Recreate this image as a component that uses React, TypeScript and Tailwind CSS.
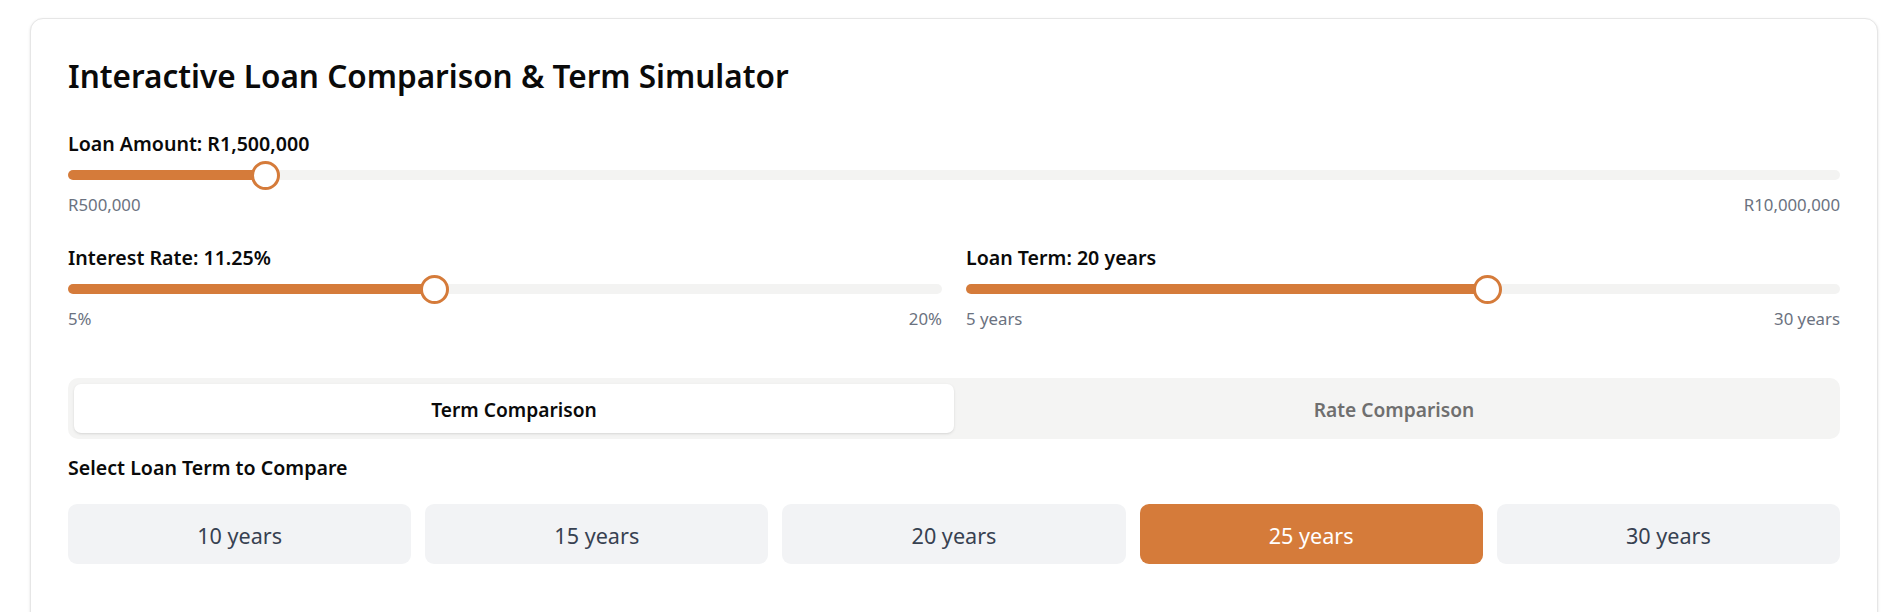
import React, { useState } from "react";

const ORANGE = "#d57b3a";
const TRACK = "#f3f3f2";

const Slider = ({
  min,
  max,
  step,
  value,
  onChange,
}: {
  min: number;
  max: number;
  step: number;
  value: number;
  onChange: (v: number) => void;
}) => {
  const p = (value - min) / (max - min);
  return (
    <input
      type="range"
      min={min}
      max={max}
      step={step}
      value={value}
      onChange={(e) => onChange(Number(e.target.value))}
      className="block w-full h-[10px] appearance-none rounded-full cursor-pointer outline-none [&::-webkit-slider-thumb]:appearance-none [&::-webkit-slider-thumb]:w-[29px] [&::-webkit-slider-thumb]:h-[29px] [&::-webkit-slider-thumb]:rounded-full [&::-webkit-slider-thumb]:bg-white [&::-webkit-slider-thumb]:border-[3px] [&::-webkit-slider-thumb]:border-solid [&::-webkit-slider-thumb]:border-[#d57b3a]"
      style={{
        background: `linear-gradient(to right, ${ORANGE} calc(14.5px + ${p} * (100% - 29px)), ${TRACK} 0)`,
      }}
    />
  );
};

const SliderField = ({
  label,
  minLabel,
  maxLabel,
  ...rest
}: {
  label: string;
  minLabel: string;
  maxLabel: string;
  min: number;
  max: number;
  step: number;
  value: number;
  onChange: (v: number) => void;
}) => (
  <div>
    <div className="text-[19.6px] leading-[29px] font-semibold text-[#0a0a0a] mb-[12px]">
      {label}
    </div>
    <Slider {...rest} />
    <div className="flex justify-between mt-[13px] text-[16.8px] leading-6 text-[#6b7280]">
      <span>{minLabel}</span>
      <span>{maxLabel}</span>
    </div>
  </div>
);

const fmt = (n: number) => "R" + n.toLocaleString("en-US");

export default function App() {
  const [amount, setAmount] = useState(1500000);
  const [rate, setRate] = useState(11.25);
  const [term, setTerm] = useState(20);
  const [tab, setTab] = useState("term");
  const [compareTerm, setCompareTerm] = useState(25);

  return (
    <div className="min-h-screen bg-white pl-[30px] pr-[13px] pt-[18px] font-['Noto_Sans',sans-serif]">
      <div className="rounded-[13px] border border-[#e6e6e6] bg-white px-[37px] pt-[38px] pb-[120px] shadow-sm">
        <h2 className="text-[31.5px] leading-[38px] font-semibold text-[#0a0a0a] mb-[34px]">
          Interactive Loan Comparison &amp; Term Simulator
        </h2>

        {/* SLIDERS */}
        <SliderField
          label={`Loan Amount: ${fmt(amount)}`}
          minLabel="R500,000"
          maxLabel="R10,000,000"
          min={500000}
          max={10000000}
          step={50000}
          value={amount}
          onChange={setAmount}
        />

        <div className="grid grid-cols-2 gap-[24px] mt-[26px]">
          <SliderField
            label={`Interest Rate: ${rate}%`}
            minLabel="5%"
            maxLabel="20%"
            min={5}
            max={20}
            step={0.25}
            value={rate}
            onChange={setRate}
          />
          <SliderField
            label={`Loan Term: ${term} years`}
            minLabel="5 years"
            maxLabel="30 years"
            min={5}
            max={30}
            step={1}
            value={term}
            onChange={setTerm}
          />
        </div>

        {/* TABS */}
        <div className="grid grid-cols-2 mt-[47px] p-[6px] rounded-[10px] bg-[#f4f4f3]">
          <button
            onClick={() => setTab("term")}
            className={
              tab === "term"
                ? "h-[49px] pt-[3px] rounded-[7px] bg-white shadow-sm text-[19.2px] font-semibold text-[#0a0a0a]"
                : "h-[49px] pt-[3px] rounded-[7px] text-[19.2px] font-semibold text-[#6f6f6f]"
            }
          >
            Term Comparison
          </button>
          <button
            onClick={() => setTab("rate")}
            className={
              tab === "rate"
                ? "h-[49px] pt-[3px] rounded-[7px] bg-white shadow-sm text-[19.2px] font-semibold text-[#0a0a0a]"
                : "h-[49px] pt-[3px] rounded-[7px] text-[19.2px] font-semibold text-[#6f6f6f]"
            }
          >
            Rate Comparison
          </button>
        </div>

        <div className="mt-[14px] mb-[22px] text-[19.6px] leading-[29px] font-semibold text-[#0a0a0a]">
          Select Loan Term to Compare
        </div>

        <div className="grid grid-cols-5 gap-[14px]">
          {[10, 15, 20, 25, 30].map((t) => (
            <button
              key={t}
              onClick={() => setCompareTerm(t)}
              className={
                t === compareTerm
                  ? "h-[60px] pt-[4px] rounded-[9px] bg-[#d57b3a] text-white text-[21.6px]"
                  : "h-[60px] pt-[4px] rounded-[9px] bg-[#f2f3f5] text-[#374151] text-[21.6px]"
              }
            >
              {t} years
            </button>
          ))}
        </div>
      </div>
    </div>
  );
}
